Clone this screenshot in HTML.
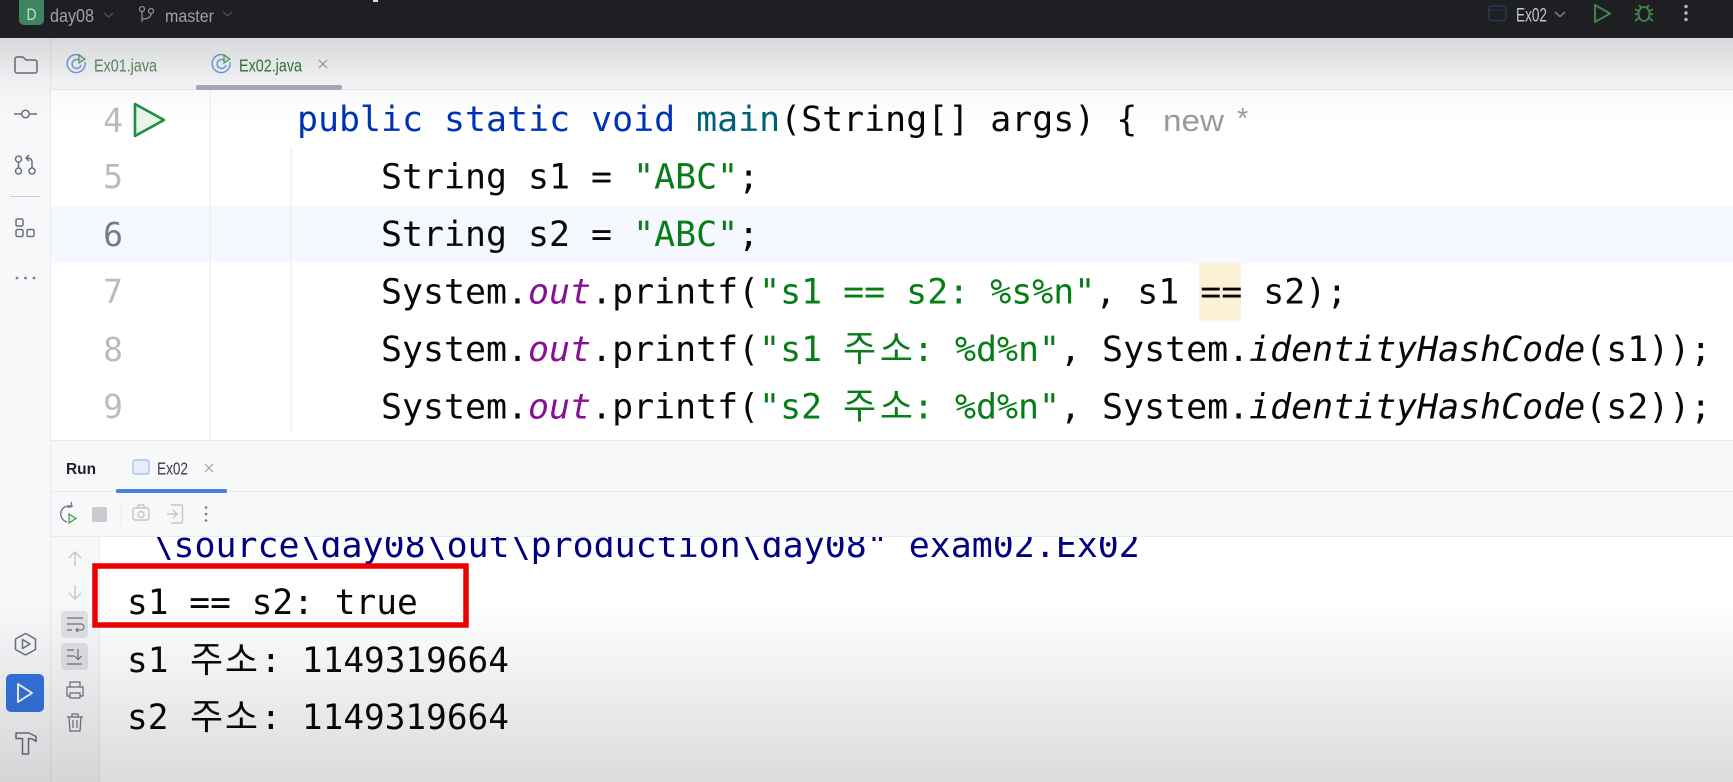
<!DOCTYPE html>
<html><head><meta charset="utf-8"><title>Ex02</title>
<style>
html,body{margin:0;padding:0;background:#fff;width:1733px;height:782px;overflow:hidden}
svg{display:block;position:absolute;left:0;top:0}
text{white-space:pre}
.c{font-family:"DejaVu Sans Mono","Liberation Mono",monospace;font-size:34.9px;fill:#080808}
.k{fill:#0033b3}.m{fill:#00627a}.s{fill:#067d17}.o{fill:#871094;font-style:italic}.i{font-style:italic}
.h{font-family:"Noto Sans CJK KR","NanumGothic",sans-serif;font-size:36px;font-weight:400}
.n{font-family:"DejaVu Sans Mono","Liberation Mono",monospace;font-size:33px;fill:#b9bbc3;text-anchor:middle}
.u{font-family:"Liberation Sans",sans-serif}
</style></head><body>
<svg width="1733" height="782" viewBox="0 0 1733 782" xmlns="http://www.w3.org/2000/svg">
<defs>
<linearGradient id="topShade" x1="0" y1="0" x2="0" y2="1"><stop offset="0" stop-color="#000" stop-opacity=".13"/><stop offset=".55" stop-color="#000" stop-opacity=".025"/><stop offset="1" stop-color="#000" stop-opacity="0"/></linearGradient>
<linearGradient id="botShade" x1="0" y1="0" x2="0" y2="1"><stop offset="0" stop-color="#000" stop-opacity="0"/><stop offset="1" stop-color="#000" stop-opacity=".14"/></linearGradient>
<clipPath id="con"><rect x="100" y="537" width="1633" height="245"/></clipPath>
</defs>
<rect width="1733" height="782" fill="#fff"/>
<!-- sidebar & panels -->
<rect x="0" y="38" width="50" height="744" fill="#f7f8fa"/>
<rect x="50" y="38" width="1683" height="51" fill="#f7f8fa"/>
<rect x="50" y="440" width="1683" height="97" fill="#f7f8fa"/>
<rect x="50" y="537" width="49" height="245" fill="#f7f8fa"/>
<!-- current line -->
<rect x="50" y="205.500" width="1683" height="57.500" fill="#f5f8fe"/>
<rect x="1199" y="263" width="42" height="57.500" fill="#fbf2d5"/>
<!-- borders -->
<g fill="#e8eaee">
<rect x="50" y="38" width="1" height="744"/>
<rect x="50" y="89" width="1683" height="1"/>
<rect x="50" y="440" width="1683" height="1"/>
<rect x="50" y="491" width="1683" height="1"/>
<rect x="50" y="536" width="1683" height="1"/>
<rect x="99" y="537" width="1" height="245"/>
<rect x="209.500" y="90" width="1" height="350"/>
<rect x="290.500" y="148" width="1" height="286"/>
<rect x="120.500" y="502" width="1" height="24"/>
</g>
<!-- title bar -->
<rect width="1733" height="38" fill="#1e1f22"/>
<rect x="373" y="0" width="5" height="2" fill="#ddd"/>
<rect x="19" y="-6" width="25" height="31" rx="5" fill="#3c8560"/>
<text x="31.500" y="20" class="u" font-size="17" fill="#bfe0cd" text-anchor="middle" textLength="10" lengthAdjust="spacingAndGlyphs">D</text>
<text x="50" y="22" class="u" font-size="18.500" fill="#9fa2a8" textLength="44" lengthAdjust="spacingAndGlyphs">day08</text>
<path d="M104 13l4.500 4 4.500-4" fill="none" stroke="#4f5256" stroke-width="1.300"/>
<g fill="none" stroke="#8a8d92" stroke-width="1.300"><circle cx="142" cy="9" r="2.500"/><circle cx="151" cy="11" r="2.500"/><path d="M142 12v10M142 19c5 0 9-1 9-5.500"/></g>
<text x="165" y="22" class="u" font-size="17.500" fill="#9fa2a8" textLength="49" lengthAdjust="spacingAndGlyphs">master</text>
<path d="M223 12l4.500 4 4.500-4" fill="none" stroke="#4f5256" stroke-width="1.300"/>
<rect x="1489" y="6" width="17" height="14.500" rx="2.500" fill="none" stroke="#2a3654" stroke-width="1.500"/>
<path d="M1490 10h15" stroke="#2a3654" stroke-width="1"/>
<text x="1516" y="21.500" class="u" font-size="19" fill="#c4c6ca" textLength="31" lengthAdjust="spacingAndGlyphs">Ex02</text>
<path d="M1555 12l5 4.500 5-4.500" fill="none" stroke="#85888d" stroke-width="1.400"/>
<path d="M1595 5v17l15-8.500z" fill="none" stroke="#47834c" stroke-width="1.900" stroke-linejoin="round"/>
<g fill="none" stroke="#47834c" stroke-width="1.800"><ellipse cx="1644" cy="14" rx="5.500" ry="7"/><path d="M1639 5l3 3.500M1649 5l-3 3.500M1635 9l4 2.500M1653 9l-4 2.500M1635 14h4M1649 14h4M1635 21l4-3M1653 21l-4-3"/></g>
<g fill="#b7b9bd"><circle cx="1686" cy="6.500" r="1.700"/><circle cx="1686" cy="13" r="1.700"/><circle cx="1686" cy="19.500" r="1.700"/></g>
<!-- sidebar icons -->
<g fill="none" stroke="#6c707e" stroke-width="1.500" stroke-linejoin="round">
<path d="M15 59a2 2 0 0 1 2-2h6l3 3h9a2 2 0 0 1 2 2v9a2 2 0 0 1-2 2H17a2 2 0 0 1-2-2z"/>
<circle cx="25.500" cy="114" r="3.800"/><path d="M14 114h7.700M29.300 114H37"/>
<circle cx="18.500" cy="159" r="3"/><circle cx="18.500" cy="171" r="3"/><circle cx="32" cy="171" r="3"/><path d="M18.500 162v6M32 168v-6c0-3-2-4-5-4M29 155l-3 3 3 3"/>
<rect x="16" y="219" width="7" height="7" rx="1.500"/><rect x="16" y="229.500" width="7" height="7" rx="1.500"/><rect x="27" y="229.500" width="7" height="7" rx="1.500"/>
<path d="M25.500 633.500l10 5.500v10.500l-10 5.500-10-5.500V639z"/><path d="M22.500 639.500v9l7.500-4.500z"/>
<path d="M16 733h13l7 3.500v5c-2-2-4-3-7-3h-.5V754h-6V738.500H16z"/>
</g>
<rect x="10" y="196" width="30" height="1" fill="#c9ccd6"/>
<g fill="#7b7f8c"><circle cx="17" cy="278" r="1.400"/><circle cx="25.500" cy="278" r="1.400"/><circle cx="34" cy="278" r="1.400"/></g>
<rect x="6" y="674" width="38" height="38" rx="5" fill="#3574e0"/>
<path d="M18 684v18l14-9z" fill="none" stroke="#fff" stroke-width="1.900" stroke-linejoin="round"/>
<!-- tabs -->
<g fill="none" stroke="#6d9be0" stroke-width="1.400">
<path d="M81 56a9 9 0 1 0 4 6"/><path d="M80 61a4.500 4.500 0 1 0 1 4"/>
<path d="M226 56a9 9 0 1 0 4 6"/><path d="M225 61a4.500 4.500 0 1 0 1 4"/>
</g>
<path d="M79 55v8l6-4z" fill="#d8efd9" stroke="#4c9a5a" stroke-width="1.100"/>
<path d="M224 55v8l6-4z" fill="#d8efd9" stroke="#4c9a5a" stroke-width="1.100"/>
<text x="94" y="71.500" class="u" font-size="17.500" fill="#5f8a62" textLength="63" lengthAdjust="spacingAndGlyphs">Ex01.java</text>
<text x="239" y="71.500" class="u" font-size="17.500" fill="#2f7a3a" textLength="63" lengthAdjust="spacingAndGlyphs">Ex02.java</text>
<path d="M319 60l8 8M327 60l-8 8" stroke="#9a9da3" stroke-width="1.200"/>
<rect x="196" y="85" width="146" height="5" rx="2" fill="#a9a9ba"/>
<!-- gutter -->
<text x="113" y="131.500" class="n">4</text>
<text x="113" y="188" class="n">5</text>
<text x="113" y="246" class="n" style="fill:#767a84">6</text>
<text x="113" y="303" class="n">7</text>
<text x="113" y="361" class="n">8</text>
<text x="113" y="418" class="n">9</text>
<path d="M135 104v32l29-16z" fill="#e8f5e9" stroke="#1f8f43" stroke-width="2.600" stroke-linejoin="round"/>
<!-- code -->
<text x="297" y="131" class="c"><tspan class="k">public static void</tspan> <tspan class="m">main</tspan>(String[] args) {</text>
<text x="1163" y="131" class="u" font-size="31" fill="#9a9a9a" textLength="61" lengthAdjust="spacingAndGlyphs">new</text>
<text x="1237" y="128" class="u" font-size="29" fill="#9a9a9a">*</text>
<text x="381" y="188.300" class="c">String s1 = <tspan class="s">"ABC"</tspan>;</text>
<text x="381" y="246" class="c">String s2 = <tspan class="s">"ABC"</tspan>;</text>
<text x="381" y="303.500" class="c">System.<tspan class="o">out</tspan>.printf(<tspan class="s">"s1 == s2: %s%n"</tspan>, s1 == s2);</text>
<text x="381" y="360.800" class="c">System.<tspan class="o">out</tspan>.printf(<tspan class="s">"s1 </tspan></text>
<text x="843" y="360.800" class="h" style="fill:#067d17" textLength="70" lengthAdjust="spacing">주소</text>
<text x="913" y="360.800" class="c"><tspan class="s">: %d%n"</tspan>, System.<tspan class="i">identityHashCode</tspan>(s1));</text>
<text x="381" y="418.300" class="c">System.<tspan class="o">out</tspan>.printf(<tspan class="s">"s2 </tspan></text>
<text x="843" y="418.300" class="h" style="fill:#067d17" textLength="70" lengthAdjust="spacing">주소</text>
<text x="913" y="418.300" class="c"><tspan class="s">: %d%n"</tspan>, System.<tspan class="i">identityHashCode</tspan>(s2));</text>
<!-- run panel -->
<text x="66" y="474" class="u" font-size="16" font-weight="700" fill="#1f2024" textLength="30" lengthAdjust="spacingAndGlyphs">Run</text>
<rect x="133" y="460" width="16" height="14" rx="2.500" fill="#e6edfb" stroke="#9db7ea" stroke-width="1.200"/>
<text x="157" y="474.500" class="u" font-size="17.500" fill="#3a3c42" textLength="31" lengthAdjust="spacingAndGlyphs">Ex02</text>
<path d="M205 464l8 8M213 464l-8 8" stroke="#a0a3a9" stroke-width="1.200"/>
<rect x="116" y="489" width="111" height="4" rx="1.500" fill="#4a7fe0"/>
<!-- toolbar -->
<g fill="none" stroke="#6c707e" stroke-width="1.300"><path d="M71 506a8 8 0 1 0-4 16M71 502l1 4.500-4.500 1"/></g>
<path d="M69 514v9l7-4.500z" fill="#dff2e2" stroke="#3f9a55" stroke-width="1.200"/>
<rect x="92" y="507" width="15" height="15" rx="2" fill="#c9cacd"/>
<g fill="none" stroke="#c3c5c9" stroke-width="1.400">
<rect x="133" y="508" width="16" height="12" rx="2"/><circle cx="141" cy="514.500" r="3"/><path d="M137 508l1.500-3h5l1.500 3"/>
<path d="M171 505h10a1.500 1.500 0 0 1 1.500 1.500v15a1.500 1.500 0 0 1-1.500 1.500h-10M167 514h9M173 510l4 4-4 4"/>
</g>
<g fill="#73767c"><circle cx="206" cy="507.500" r="1.300"/><circle cx="206" cy="514" r="1.300"/><circle cx="206" cy="520.500" r="1.300"/></g>
<!-- console side -->
<g fill="none" stroke="#c4c6cb" stroke-width="1.400"><path d="M75 552v14M69 558l6-6 6 6M75 585v14M69 593l6 6 6-6"/></g>
<rect x="61" y="611" width="27" height="27" rx="4" fill="#dfe1e4"/>
<rect x="61" y="643" width="27" height="27" rx="4" fill="#dfe1e4"/>
<g fill="none" stroke="#6c707e" stroke-width="1.200">
<path d="M67 618h16M67 624h14a3 3 0 0 1 0 6h-5M78 628l-2 2 2 2M67 630h5"/>
<path d="M67 650h7M67 656h7M67 664h15M78 649v10M74.500 656l3.500 3.500 3.500-3.500"/>
<path d="M70 687v-5h10v5M70 696h-3v-9h16v9h-3M70 693h10v5H70z"/>
<path d="M67 717h16M72 717v-3h6v3M69 717l1 14h10l1-14M73 720v8M77 720v8"/>
</g>
<!-- console text -->
<g clip-path="url(#con)">
<text x="152.500" y="557" class="c" style="fill:#000080;font-size:34.9px">\source\day08\out\production\day08" exam02.Ex02</text>
</g>
<text x="127" y="614" class="c" style="font-size:34.5px">s1 == s2: true</text>
<text x="127" y="672" class="c" style="font-size:34.4px">s1 </text>
<text x="190" y="672" class="h" style="fill:#080808" textLength="68" lengthAdjust="spacing">주소</text>
<text x="260.500" y="672" class="c" style="font-size:34.4px">: 1149319664</text>
<text x="127" y="729" class="c" style="font-size:34.4px">s2 </text>
<text x="190" y="729" class="h" style="fill:#080808" textLength="68" lengthAdjust="spacing">주소</text>
<text x="260.500" y="729" class="c" style="font-size:34.4px">: 1149319664</text>
<rect x="95" y="566" width="371" height="59" fill="none" stroke="#ee0000" stroke-width="5.500"/>
<!-- video shade -->
<rect x="0" y="38" width="1733" height="85" fill="url(#topShade)"/>
<rect x="0" y="600" width="1733" height="182" fill="url(#botShade)"/>
</svg>
</body></html>
